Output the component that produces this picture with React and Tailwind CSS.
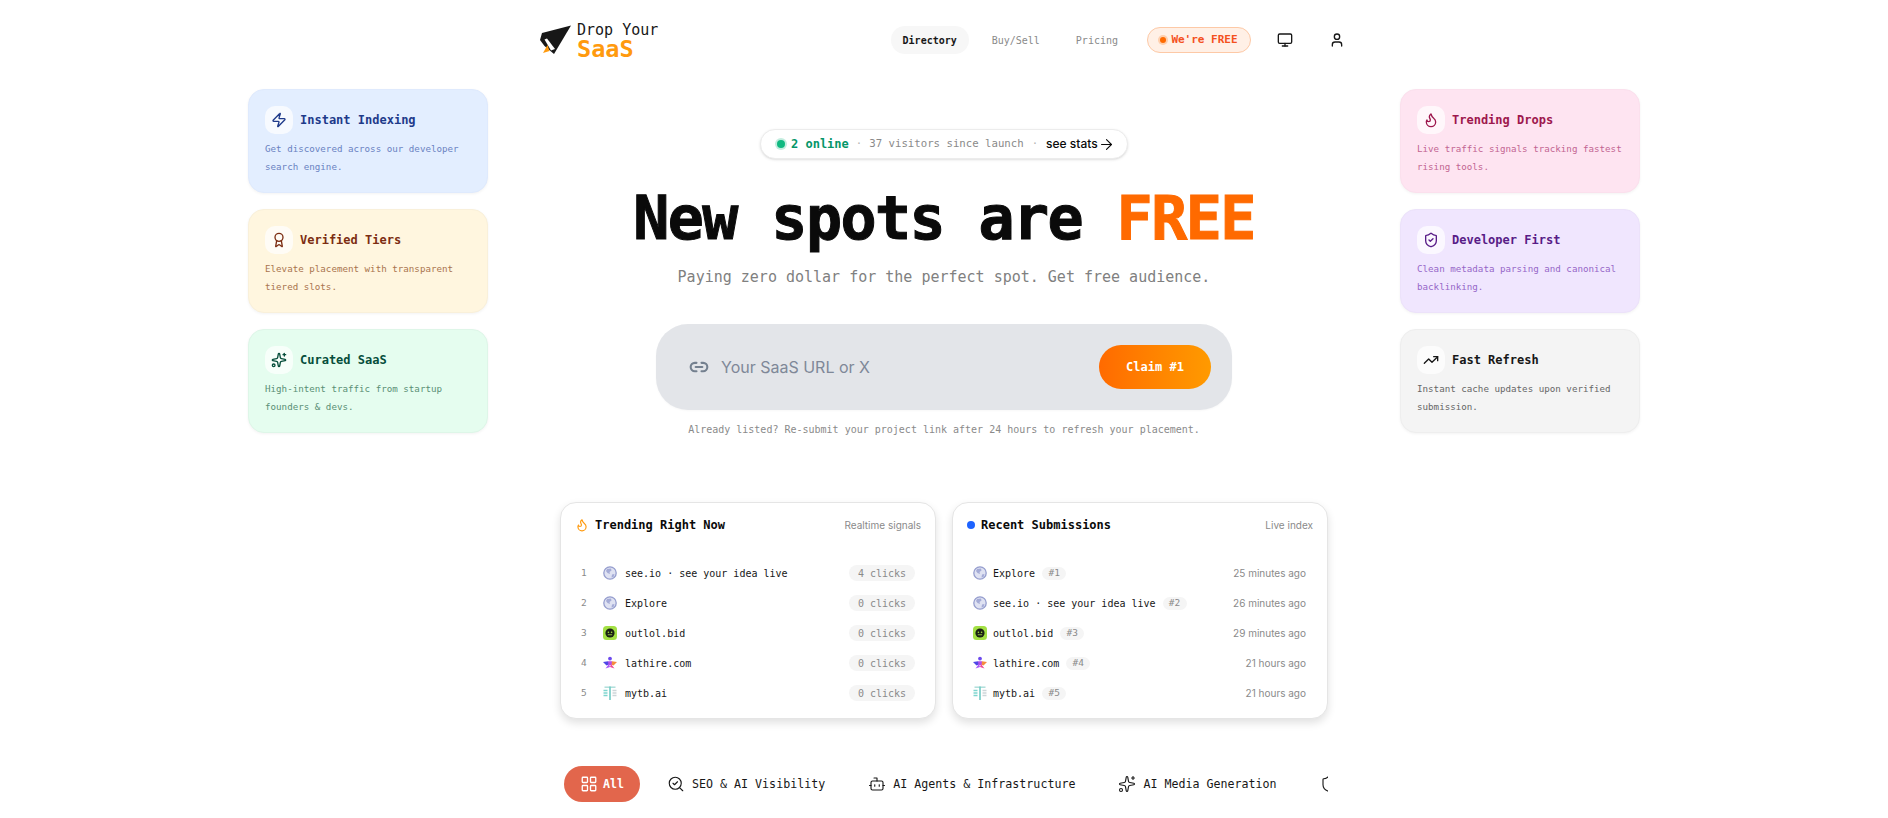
import {
  Zap,
  Award,
  Sparkles,
  Flame,
  ShieldCheck,
  TrendingUp,
  Link2,
  Monitor,
  User,
  LayoutGrid,
  SearchCheck,
  Bot,
  Shield,
  ArrowRight,
} from "lucide-react";

const mono = "font-['DejaVu_Sans_Mono','Liberation_Mono',monospace]";
const sans = "font-['Inter','Noto_Sans',sans-serif]";

const leftCards = [
  {
    title: "Instant Indexing",
    text: "Get discovered across our developer search engine.",
    Icon: Zap,
    box: "bg-[#e3eeff] border-[#dfeafd]",
    head: "text-[#1e3a8a]",
    body: "text-[#6a82c2]",
  },
  {
    title: "Verified Tiers",
    text: "Elevate placement with transparent tiered slots.",
    Icon: Award,
    box: "bg-[#fff6df] border-[#f9f0da]",
    head: "text-[#7c2d12]",
    body: "text-[#a9744e]",
  },
  {
    title: "Curated SaaS",
    text: "High-intent traffic from startup founders & devs.",
    Icon: Sparkles,
    box: "bg-[#e5fdef] border-[#def6e8]",
    head: "text-[#064e3b]",
    body: "text-[#5a8f75]",
  },
];

const rightCards = [
  {
    title: "Trending Drops",
    text: "Live traffic signals tracking fastest rising tools.",
    Icon: Flame,
    box: "bg-[#fee4f1] border-[#fbe0ed]",
    head: "text-[#9d174d]",
    body: "text-[#c26492]",
  },
  {
    title: "Developer First",
    text: "Clean metadata parsing and canonical backlinking.",
    Icon: ShieldCheck,
    box: "bg-[#f0e6fe] border-[#ece2fa]",
    head: "text-[#581c87]",
    body: "text-[#9666c8]",
  },
  {
    title: "Fast Refresh",
    text: "Instant cache updates upon verified submission.",
    Icon: TrendingUp,
    box: "bg-[#f4f4f4] border-[#eeeeee]",
    head: "text-[#171717]",
    body: "text-[#666666]",
  },
];

const trending = [
  { name: "see.io · see your idea live", logo: "globe", clicks: 4 },
  { name: "Explore", logo: "globe", clicks: 0 },
  { name: "outlol.bid", logo: "outlol", clicks: 0 },
  { name: "lathire.com", logo: "lathire", clicks: 0 },
  { name: "mytb.ai", logo: "mytb", clicks: 0 },
];

const recent = [
  { name: "Explore", logo: "globe", time: "25 minutes ago" },
  { name: "see.io · see your idea live", logo: "globe", time: "26 minutes ago" },
  { name: "outlol.bid", logo: "outlol", time: "29 minutes ago" },
  { name: "lathire.com", logo: "lathire", time: "21 hours ago" },
  { name: "mytb.ai", logo: "mytb", time: "21 hours ago" },
];

function Logo() {
  return (
    <svg width="32" height="30" viewBox="0 0 32 30" className="shrink-0">
      <path d="M31 0.5 L2 8 L0 15 L4.5 21 L14 29 Z" fill="#171717" />
      <path d="M4.5 14.5 L7 13.5 L15 24 L11 25.5 Z" fill="#ffffff" />
      <path d="M7.5 20 L9.5 26 L3 28 Z" fill="#ff9a0e" />
    </svg>
  );
}

function Favicon({ type }) {
  if (type === "globe") {
    return (
      <svg width="14" height="14" viewBox="0 0 14 14" className="shrink-0">
        <circle cx="7" cy="7" r="6.2" fill="#dfe2f2" stroke="#959dce" strokeWidth="1.3" />
        <path d="M4 3 L8 2.5 L8.5 4.5 L6.5 6 L7 8 L4.5 7 L3 5 Z" fill="#a4abd6" />
        <path d="M9 8.5 L11.5 8 L10.5 11 L8.5 11.5 Z" fill="#a4abd6" />
      </svg>
    );
  }
  if (type === "outlol") {
    return (
      <svg width="14" height="14" viewBox="0 0 14 14" className="shrink-0">
        <rect width="14" height="14" rx="3.5" fill="#a3e044" />
        <circle cx="7" cy="7" r="4.6" fill="#1a2014" />
        <circle cx="5.4" cy="6.2" r="0.8" fill="#a3e044" />
        <circle cx="8.6" cy="6.2" r="0.8" fill="#a3e044" />
        <rect x="4.8" y="8.4" width="4.4" height="0.8" fill="#a3e044" />
      </svg>
    );
  }
  if (type === "lathire") {
    return (
      <svg width="14" height="14" viewBox="0 0 14 14" className="shrink-0">
        <circle cx="7" cy="2.6" r="1.9" fill="#6d4aee" />
        <path d="M0 6 L5 5.2 L7 8 L3.5 9.5 Z" fill="#4f46e5" />
        <path d="M14 6 L9 5.2 L7 8 L10.5 9.5 Z" fill="#f58a3c" />
        <path d="M5 5.2 L9 5.2 L8.5 9 L5.5 9 Z" fill="#b14de8" />
        <path d="M6 8 L2.5 12.5 L7 11 Z" fill="#a855f7" />
        <path d="M8 8 L11.5 12.5 L7 11 Z" fill="#ec4899" />
      </svg>
    );
  }
  return (
    <svg width="14" height="14" viewBox="0 0 14 14" className="shrink-0">
      <rect x="1.5" y="0.5" width="11" height="1.4" fill="#a9dcd8" />
      <rect x="6.2" y="0.5" width="1.6" height="13.5" fill="#72cbc5" />
      <path d="M0.5 4.5h4M0.5 7h4M0.5 9.5h4" stroke="#7fd6cf" strokeWidth="1.3" />
      <path d="M9.5 4.5h4M9.5 7h4M9.5 9.5h4" stroke="#ced6d9" strokeWidth="1.3" />
    </svg>
  );
}

function SideCard({ card }) {
  const Icon = card.Icon;
  return (
    <div className={`h-[104px] rounded-2xl border p-4 shadow-[0_1px_3px_rgba(0,0,0,0.05)] ${card.box}`}>
      <div className="flex items-center gap-[7px]">
        <div className="flex h-7 w-7 items-center justify-center rounded-[10px] bg-white/70">
          <Icon size={16} strokeWidth={2} className={card.head} />
        </div>
        <span className={`text-[12px] font-semibold ${mono} ${card.head}`}>{card.title}</span>
      </div>
      <p className={`mt-[6px] -mr-1 text-[9.2px] leading-[18px] ${mono} ${card.body}`}>{card.text}</p>
    </div>
  );
}

function ListCard({ icon, title, note, children }) {
  return (
    <div className="h-[217px] w-[376px] rounded-[16px] border border-[#e5e5e5] bg-white px-[14px] pt-[14px] shadow-[0_4px_8px_rgba(0,0,0,0.12)]">
      <div className="flex h-[16px] items-center">
        {icon}
        <span className={`ml-[6px] text-[12px] font-bold text-[#0a0a0a] ${mono}`}>{title}</span>
        <span className={`ml-auto text-[10px] text-[#8a8a8a] ${sans}`}>{note}</span>
      </div>
      <div className="mt-[25px] flex flex-col px-[6px]">{children}</div>
    </div>
  );
}

export default function App() {
  return (
    <div className={`h-[818px] overflow-hidden bg-white ${mono}`}>
      {/* NAV */}
      <header className="mx-auto flex h-[80px] w-[808px] items-center">
        <div className="flex items-center gap-[5px]">
          <Logo />
          <div className="flex flex-col">
            <span className="text-[15px] leading-[17px] text-[#171717]">Drop Your</span>
            <span className="text-[23.5px] font-bold leading-[20px] text-[#ff9a0e]">SaaS</span>
          </div>
        </div>

        <nav className="ml-auto flex items-center text-[10px]">
          <span className="flex h-7 w-[78px] items-center justify-center rounded-full bg-[#f7f7f7] font-semibold text-[#171717]">
            Directory
          </span>
          <span className="ml-[23px] text-[#8a8a8a]">Buy/Sell</span>
          <span className="ml-9 text-[#8a8a8a]">Pricing</span>
          <span className="ml-[29px] flex h-[26px] w-[104px] items-center justify-center gap-[5px] rounded-full border border-[#fdc9a6] bg-[#fff0e6] text-[11px] font-bold text-[#f4511e]">
            <span className="h-[6px] w-[6px] rounded-full bg-[#ff6a00] shadow-[0_0_0_2px_rgba(255,106,0,0.25)]"></span>
            We're FREE
          </span>
          <Monitor size={16} strokeWidth={2} className="ml-[26px] text-[#171717]" />
          <User size={16} strokeWidth={2} className="ml-[36px] mr-[3px] text-[#171717]" />
        </nav>
      </header>

      <div className="mx-auto flex w-[1392px] items-start justify-between">
        {/* LEFT */}
        <div className="mt-[9px] flex w-[240px] flex-col gap-4">
          {leftCards.map((c) => (
            <SideCard key={c.title} card={c} />
          ))}
        </div>

        {/* CENTER */}
        <div className="mt-[49px] flex w-[912px] flex-col items-center">
          <div className="flex h-[30px] w-[368px] items-center rounded-full border border-[#ececec] bg-white pl-[16px] shadow-sm">
            <span className="h-[8px] w-[8px] rounded-full bg-[#10b981] shadow-[0_0_0_2px_rgba(16,185,129,0.25)]"></span>
            <span className="ml-[6px] text-[12px] font-bold text-[#059669]">2 online</span>
            <span className="mx-[7px] text-[10.7px] text-[#b5b5b5]">·</span>
            <span className="text-[10.7px] text-[#8a8a8a]">37 visitors since launch</span>
            <span className="mx-[8px] text-[10.7px] text-[#b5b5b5]">·</span>
            <span className={`text-[12px] font-medium text-[#0a0a0a] ${sans}`}>see stats</span>
            <ArrowRight size={17} strokeWidth={1.5} className="text-[#0a0a0a]" />
          </div>

          <h1 className="mt-[20px] text-[60px] font-bold leading-[78px] tracking-[-1.6px] text-[#0a0a0a] [-webkit-text-stroke:1px_currentColor]">
            New spots are <span className="text-[#ff6a00]">FREE</span>
          </h1>

          <p className="mt-[8px] text-[15px] leading-[24px] text-[#808080]">
            Paying zero dollar for the perfect spot. Get free audience.
          </p>

          <div className="mt-[35px] flex h-[86px] w-[576px] items-center rounded-[32px] bg-[#e3e5e9] pl-[33px] pr-[21px] shadow-[0_1px_2px_rgba(0,0,0,0.03)]">
            <Link2 size={20} strokeWidth={2.5} className="text-[#74808f]" />
            <span className={`ml-[12px] text-[16px] text-[#7f8898] ${sans}`}>Your SaaS URL or X</span>
            <button className="ml-auto h-[44px] w-[112px] rounded-full bg-gradient-to-r from-[#ff6a00] to-[#ff9a00] text-[12px] font-bold text-white">
              Claim #1
            </button>
          </div>

          <p className="mt-[13px] text-[10px] leading-[14px] text-[#8a8a8a]">
            Already listed? Re-submit your project link after 24 hours to refresh your placement.
          </p>

          {/* LISTS */}
          <div className="mt-[65px] flex gap-4">
            <ListCard
              icon={<Flame size={14} strokeWidth={2} className="text-[#ff9a0e]" />}
              title="Trending Right Now"
              note="Realtime signals"
            >
              {trending.map((t, i) => (
                <div key={t.name} className="flex h-[30px] items-center">
                  <span className="w-[10px] text-[9.5px] text-[#8a8a8a]">{i + 1}</span>
                  <span className="ml-[12px]">
                    <Favicon type={t.logo} />
                  </span>
                  <span className="ml-[8px] text-[10px] text-[#171717]">{t.name}</span>
                  <span className="ml-auto flex h-[16px] w-[66px] items-center justify-center rounded-full bg-[#f5f5f5] text-[10px] text-[#8a8a8a]">
                    {t.clicks} clicks
                  </span>
                </div>
              ))}
            </ListCard>

            <ListCard
              icon={<span className="h-2 w-2 rounded-full bg-[#1d63ff]"></span>}
              title="Recent Submissions"
              note="Live index"
            >
              {recent.map((r, i) => (
                <div key={r.name} className="flex h-[30px] items-center">
                  <Favicon type={r.logo} />
                  <span className="ml-[6px] text-[10px] text-[#171717]">{r.name}</span>
                  <span className="ml-[7px] flex h-[13px] w-[24px] items-center justify-center rounded-full bg-[#f5f5f5] text-[9.5px] text-[#8a8a8a]">
                    #{i + 1}
                  </span>
                  <span className={`mr-[1px] ml-auto text-[10px] text-[#8a8a8a] ${sans}`}>{r.time}</span>
                </div>
              ))}
            </ListCard>
          </div>

          {/* TABS */}
          <div className="mt-[47px] flex w-[768px] items-center gap-[11px] overflow-hidden pl-[4px] text-[11.65px] leading-[20px] text-[#171717]">
            <span className="flex h-9 shrink-0 items-center gap-[5px] rounded-full bg-[#e2664c] px-4 font-bold text-white">
              <LayoutGrid size={18} strokeWidth={1.75} />
              All
            </span>
            <span className="flex h-9 shrink-0 items-center gap-[7px] px-4 font-medium">
              <SearchCheck size={18} strokeWidth={1.5} />
              SEO & AI Visibility
            </span>
            <span className="flex h-9 shrink-0 items-center gap-[7px] px-4 font-medium">
              <Bot size={18} strokeWidth={1.5} />
              AI Agents & Infrastructure
            </span>
            <span className="flex h-9 shrink-0 items-center gap-[7px] px-4 font-medium">
              <Sparkles size={18} strokeWidth={1.5} />
              AI Media Generation
            </span>
            <span className="flex h-9 shrink-0 items-center px-4">
              <Shield size={18} strokeWidth={1.5} />
            </span>
          </div>
        </div>

        {/* RIGHT */}
        <div className="mt-[9px] flex w-[240px] flex-col gap-4">
          {rightCards.map((c) => (
            <SideCard key={c.title} card={c} />
          ))}
        </div>
      </div>
    </div>
  );
}
